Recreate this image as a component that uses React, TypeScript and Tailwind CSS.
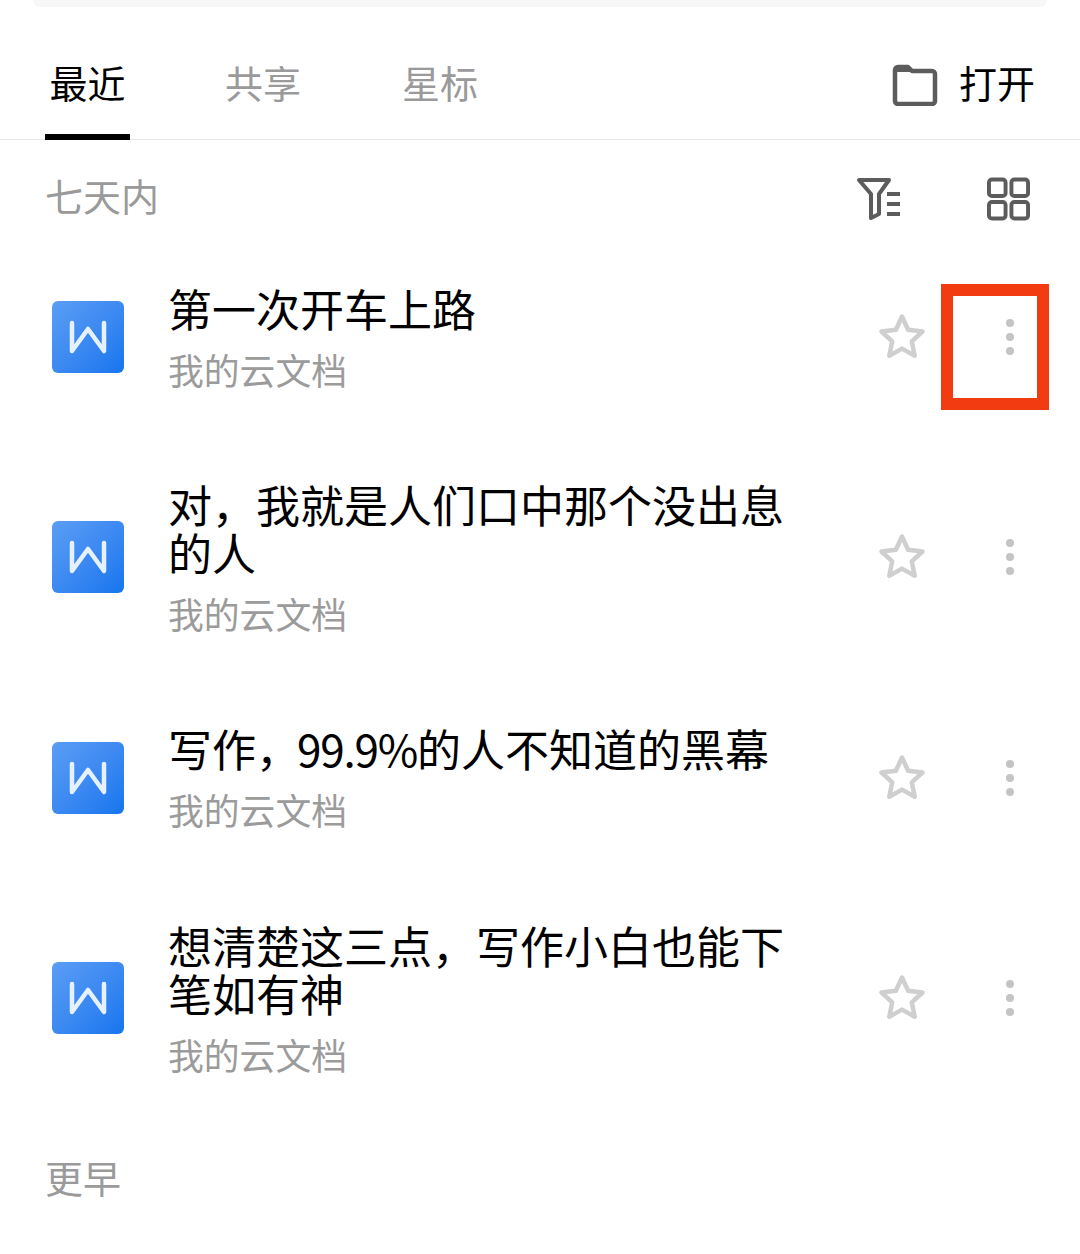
const font = '[font-family:"Noto_Sans_CJK_SC","Noto_Sans",sans-serif]';

type Doc = { key: string; lines: React.ReactNode[]; menuHighlighted?: boolean };

// Fullwidth comma, written as an escape so it stays unambiguous in the source.
const COMMA = "\uFF0C";

const docs: Doc[] = [
  { key: "a", lines: ["第一次开车上路"], menuHighlighted: true },
  { key: "b", lines: [`对${COMMA}我就是人们口中那个没出息`, "的人"] },
  {
    key: "c",
    lines: [
      <>
        写作{COMMA}
        <span className="ml-[-3px] [letter-spacing:-1.2px]">99.9%</span>的人不知道的黑幕
      </>,
    ],
  },
  { key: "d", lines: [`想清楚这三点${COMMA}写作小白也能下`, "笔如有神"] },
];

function WordIcon() {
  return (
    <div className="flex h-[72px] w-[72px] shrink-0 items-center justify-center rounded-[6px] bg-gradient-to-br from-[#5b9df5] to-[#1475ee]">
      <svg width="38" height="34" viewBox="0 0 38 34" fill="none">
        <path d="M3 3v28L19 9l16 22V3" stroke="#e6f1fe" strokeWidth="4.5" strokeLinecap="round" strokeLinejoin="round" />
      </svg>
    </div>
  );
}

function Star() {
  return (
    <svg width="50" height="48" viewBox="0 0 50 48" fill="none">
      <path
        d="M25 3.5l6.1 13.3 14.4 1.7-10.7 9.9 2.9 14.3L25 35.6l-12.7 7.1 2.9-14.3L4.5 18.5l14.4-1.7z"
        stroke="#cfcfcf"
        strokeWidth="4.5"
        strokeLinejoin="round"
      />
    </svg>
  );
}

function Dots() {
  return (
    <div className="flex w-[108px] flex-col items-center gap-[6px]">
      <span className="h-[8px] w-[8px] rounded-full bg-[#c4c4c4]" />
      <span className="h-[8px] w-[8px] rounded-full bg-[#c4c4c4]" />
      <span className="h-[8px] w-[8px] rounded-full bg-[#c4c4c4]" />
    </div>
  );
}

function DocRow({ lines, menuHighlighted }: Doc) {
  return (
    <div className="flex h-[220.3px] items-center pl-[52px] pr-[16px]">
      <WordIcon />
      <div className="ml-[44px] min-w-0 flex-1 pt-[2px]">
        {lines.map((l, i) => (
          <div key={i} className="h-[48px] whitespace-nowrap text-[44px] leading-[48px] text-black">
            {l}
          </div>
        ))}
        <div className="mt-[13px] h-[48px] text-[35.8px] leading-[48px] text-[#9b9b9b]">我的云文档</div>
      </div>
      <div className="mr-[29px] flex items-center">
        <Star />
      </div>
      <div className="relative">
        <Dots />
        {menuHighlighted && (
          <div className="absolute left-[-15px] top-[-35px] h-[126px] w-[108px] border-[12px] border-[#f33b12]" />
        )}
      </div>
    </div>
  );
}

export default function App() {
  return (
    <div className={`h-[1254px] w-[1080px] overflow-hidden bg-white ${font}`}>
      <div className="mx-[33px] h-[7px] rounded-b-[8px] bg-[#f7f7f7]" />

      <div className="flex h-[133px] items-start border-b border-[#e6e6e6] px-[45px]">
        <div className="relative flex h-[132px] w-[85px] justify-center pt-[49px] text-[38px] leading-[52px] text-black">
          最近
          <span className="absolute bottom-[-1px] left-0 h-[6px] w-[85px] bg-black" />
        </div>
        <div className="ml-[95px] pt-[49px] text-[38px] leading-[52px] text-[#9a9a9a]">共享</div>
        <div className="ml-[101px] pt-[49px] text-[38px] leading-[52px] text-[#9a9a9a]">星标</div>
        <div className="ml-auto flex items-center pt-[49px] text-[38px] leading-[52px] text-black">
          <svg className="mt-[6px]" width="46" height="42" viewBox="0 0 46 42" fill="none">
            <path
              d="M3 6a3 3 0 0 1 3-3h10l4 4h20a3 3 0 0 1 3 3v27a3 3 0 0 1-3 3H6a3 3 0 0 1-3-3z"
              stroke="#5c5c5c"
              strokeWidth="4.5"
              strokeLinejoin="round"
            />
            <path d="M3 8V5a2 2 0 0 1 2-2h11l5 5z" fill="#5c5c5c" />
          </svg>
          <span className="ml-[21px]">打开</span>
        </div>
      </div>

      <div className="flex h-[87px] items-center pl-[45px] pr-[50px] pt-[30px]">
        <span className="mb-[8px] text-[38px] leading-[52px] text-[#9a9a9a]">七天内</span>
        <svg className="ml-auto" width="46" height="44" viewBox="0 0 46 44" fill="none">
          <path
            d="M3 3h30l-10 14v20l-8 4V17z"
            stroke="#5c5c5c"
            strokeWidth="4"
            strokeLinejoin="round"
          />
          <path d="M31 17h13M31 27h13M31 37h13" stroke="#5c5c5c" strokeWidth="4" />
        </svg>
        <svg className="ml-[85px]" width="43" height="44" viewBox="0 0 44 44" fill="none">
          <rect x="2" y="2" width="17" height="17" rx="3" stroke="#5c5c5c" strokeWidth="4" />
          <rect x="25" y="2" width="17" height="17" rx="3" stroke="#5c5c5c" strokeWidth="4" />
          <rect x="2" y="25" width="17" height="17" rx="3" stroke="#5c5c5c" strokeWidth="4" />
          <rect x="25" y="25" width="17" height="17" rx="3" stroke="#5c5c5c" strokeWidth="4" />
        </svg>
      </div>

      {docs.map((d) => (
        <DocRow key={d.key} {...d} />
      ))}

      <div className="mt-[43px] pl-[45px] text-[38px] leading-[52px] text-[#9a9a9a]">更早</div>
    </div>
  );
}
